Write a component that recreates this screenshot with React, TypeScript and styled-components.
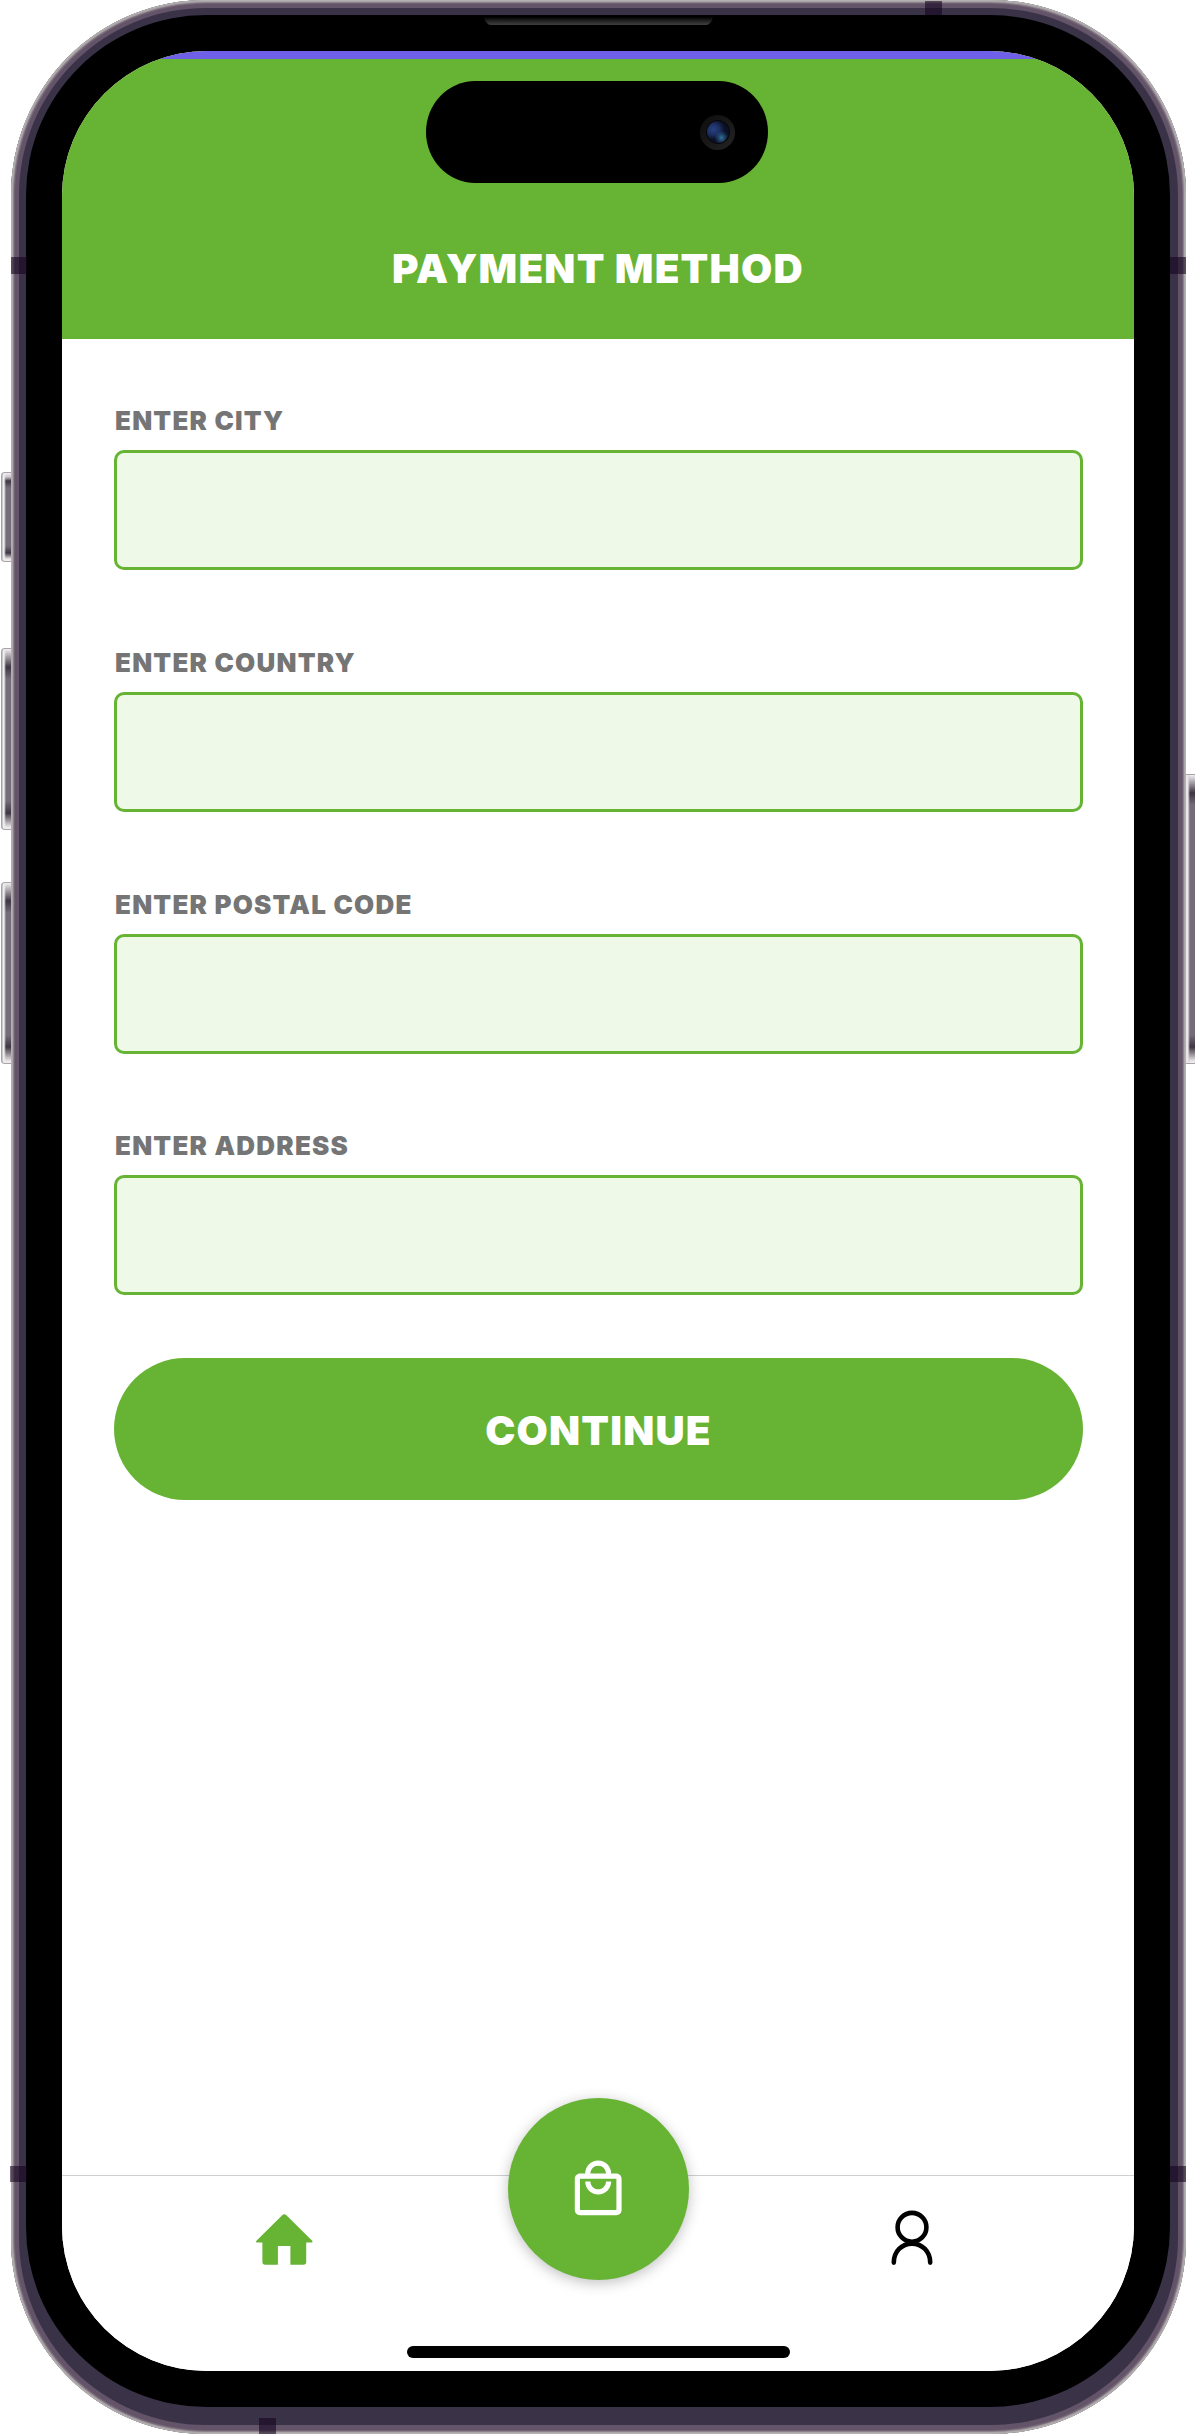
import React from 'react';
import styled, { createGlobalStyle } from 'styled-components';
import { MdOutlineLocalMall } from 'react-icons/md';

const GREEN = '#67b333';

const GlobalStyle = createGlobalStyle`
  * { box-sizing: border-box; }
  body { margin: 0; background: #fff; font-family: Inter, 'Liberation Sans', sans-serif; }
  button { font: inherit; border: 0; padding: 0; cursor: pointer; background: none; }
`;

const Stage = styled.div`
  position: relative;
  width: 1195px;
  height: 2434px;
  padding: 0 9px 0 11px;
  overflow: hidden;
  background: #fff;
`;

const SideKey = styled.div<{ $top: number; $height: number; $right?: boolean }>`
  position: absolute;
  top: ${p => p.$top}px;
  ${p => (p.$right ? 'left: 1186px;' : 'left: 1px;')}
  width: 10px;
  height: ${p => p.$height}px;
  border: 1px solid #a9a3a9;
  ${p => (p.$right ? 'border-left: 0; border-right-color: #8f8792; border-radius: 0 2px 2px 0;' : 'border-right: 0; border-radius: 4px 0 0 4px;')}
  background:
    linear-gradient(
      ${p => (p.$right ? 'to right, #e9e6e9 0 2px, rgba(200,196,202,.5) 3px, transparent 4px' : 'to right, #c9c7cc 0 1px, #f0eef0 1px 2px, transparent 4px')}
    ),
    linear-gradient(to bottom, #f1eff1 0, #c8c4c9 4px, #3c3542 ${p => (p.$height > 100 ? 18 : 8)}px, #756c79 ${p => (p.$height > 100 ? 30 : 15)}px,
      #756c79 calc(100% - ${p => (p.$height > 100 ? 28 : 15)}px), #3c3542 calc(100% - ${p => (p.$height > 100 ? 16 : 8)}px), #e9e6e9 calc(100% - 2px), #f1eff1 100%);
`;

const Rim = styled.div`
  width: 1175px;
  height: 2434px;
  padding: 8px;
  border-radius: 195px;
  background: #64546a;
  box-shadow: inset 0 0 0 1px #b3b0b0, inset 0 0 0 2px #aaa5a8, inset 0 0 0 3px #8c8089, inset 0 0 0 4px #706273;
`;

const Band = styled.div`
  height: 2417px;
  padding: 7px 8px 18px 7px;
  border-radius: 187px;
  background: #3a3347;
`;

const Bezel = styled.div`
  position: relative;
  height: 2392px;
  padding: 36px 36px 35px;
  border-radius: 180px;
  background: #000;
`;

const Antenna = styled.div<{ $x: number; $y: number; $w: number; $h: number }>`
  position: absolute;
  left: ${p => p.$x}px;
  top: ${p => p.$y}px;
  width: ${p => p.$w}px;
  height: ${p => p.$h}px;
  background: rgba(19, 2, 29, 0.58);
`;

const Speaker = styled.div`
  position: absolute;
  top: 0;
  left: 457px;
  width: 231px;
  height: 10px;
  border-radius: 0 0 8px 8px;
  background: linear-gradient(#000 20%, #1a1a1a 50%, #3a3a3a 90%);
  clip-path: polygon(0 0, 100% 0, 99% 60%, 97.5% 100%, 2.5% 100%, 1% 60%);
`;

const Screen = styled.main`
  position: relative;
  display: flex;
  flex-direction: column;
  width: 1072px;
  height: 2320px;
  border-radius: 145px;
  overflow: hidden;
  background: #fff;
`;

const Header = styled.header`
  flex: none;
  height: 288px;
  border-top: 8px solid #705fe8;
  background: ${GREEN};
  display: flex;
  flex-direction: column;
  align-items: center;
`;

const Island = styled.div`
  margin-top: 22px;
  margin-right: 2px;
  width: 342px;
  height: 102px;
  border-radius: 49px / 51px;
  background: #000;
  display: flex;
  align-items: center;
  justify-content: flex-end;
  padding-right: 33px;
`;

const Camera = styled.div`
  width: 35px;
  height: 35px;
  border-radius: 50%;
  background: linear-gradient(135deg, #0d0d0d, #242424);
  display: grid;
  place-items: center;
`;

const Lens = styled.div`
  width: 22px;
  height: 22px;
  border-radius: 50%;
  background:
    radial-gradient(circle at 66% 76%, #34729c 0, rgba(42, 95, 140, 0.6) 15%, transparent 32%),
    radial-gradient(ellipse at 28% 38%, #27427f 0, rgba(32, 52, 110, 0.85) 28%, transparent 52%),
    #0b1024;
  box-shadow: 0 0 0 1px #08080c;
`;

const Title = styled.h1`
  margin: 62px 0 0;
  font-size: 40.4px;
  line-height: 48px;
  font-weight: 900;
  letter-spacing: 1.2px;
  color: #fff;
  white-space: nowrap;
`;

const Form = styled.form`
  display: flex;
  flex-direction: column;
  flex: 1;
  padding: 66.4px 51px 0 52px;
`;

const Field = styled.label`
  display: flex;
  flex-direction: column;
  height: 241.67px;
`;

const Label = styled.span`
  height: 45px;
  padding-left: 1px;
  font-size: 26px;
  line-height: 32px;
  font-weight: 900;
  letter-spacing: 1.2px;
  color: #757575;
`;

const Input = styled.input`
  width: 969px;
  height: 120px;
  border: 3px solid ${GREEN};
  border-radius: 10px;
  outline: 0;
  background: #eef9e8;
`;

const Continue = styled.button`
  width: 969px;
  height: 142px;
  margin-top: -14px;
  padding-top: 2px;
  border-radius: 71px;
  background: ${GREEN};
  color: #fff;
  font-size: 40.4px;
  font-weight: 900;
  letter-spacing: 1.2px;
`;

const TabBar = styled.nav`
  flex: none;
  height: 196px;
  border-top: 1px solid #cfcfcf;
  display: grid;
  grid-template-columns: 446px 181px 445px;
  grid-template-rows: 170px 13px;
  background: #fff;
`;

const Tab = styled.button<{ $shift: number }>`
  display: block;
  height: 60px;
  margin: 34px 0 0 ${p => p.$shift}px;
  width: 64px;
  svg { display: block; }
`;

const Fab = styled.button`
  width: 181px;
  height: 182px;
  margin-top: -78px;
  border-radius: 50%;
  background: ${GREEN};
  color: #fff;
  display: grid;
  place-items: center;
  box-shadow: 0 3px 14px rgba(0, 0, 0, 0.25);
  svg { display: block; }
`;

const HomeIndicator = styled.div`
  grid-column: 1 / -1;
  justify-self: center;
  width: 383px;
  height: 12px;
  border-radius: 6px;
  background: #000;
`;

const HomeIcon = () => (
  <svg width="64" height="60" viewBox="0 0 64 60" fill={GREEN}>
    <path d="M30.2 5.2Q32.3 3.4 34.4 5.2L60.4 31Q61 32.5 59.5 32.6H54.2V52Q54.2 54.7 51.5 54.7H38.4V36H25.9V54.7H13.2Q10.4 54.7 10.4 52V32.6H5Q3.5 32.5 4.2 31Z" />
  </svg>
);

const PersonIcon = () => (
  <svg width="64" height="60" viewBox="0 0 64 60" fill="none" stroke="#000" strokeWidth="4.6" strokeLinecap="round">
    <circle cx="32" cy="17.3" r="14.4" />
    <path d="M13.8 52.6C13.8 41.6 21.8 33.6 32 33.6S50.2 41.6 50.2 52.6" />
  </svg>
);

const fields = ['ENTER CITY', 'ENTER COUNTRY', 'ENTER POSTAL CODE', 'ENTER ADDRESS'];

export default function App() {
  return (
    <>
      <GlobalStyle />
      <Stage>
        <SideKey $top={472} $height={90} />
        <SideKey $top={648} $height={182} />
        <SideKey $top={882} $height={182} />
        <SideKey $top={774} $height={290} $right />
        <Rim>
          <Band>
            <Bezel>
              <Speaker />
              <Screen>
                <Header>
                  <Island>
                    <Camera><Lens /></Camera>
                  </Island>
                  <Title>PAYMENT METHOD</Title>
                </Header>
                <Form onSubmit={e => e.preventDefault()}>
                  {fields.map(name => (
                    <Field key={name}>
                      <Label>{name}</Label>
                      <Input />
                    </Field>
                  ))}
                  <Continue type="submit">CONTINUE</Continue>
                </Form>
                <TabBar>
                  <Tab $shift={190} aria-label="Home"><HomeIcon /></Tab>
                  <Fab aria-label="Bag"><MdOutlineLocalMall size={62.4} /></Fab>
                  <Tab $shift={191} aria-label="Profile"><PersonIcon /></Tab>
                  <HomeIndicator />
                </TabBar>
              </Screen>
            </Bezel>
          </Band>
        </Rim>
        <Antenna $x={11} $y={257} $w={16} $h={17} />
        <Antenna $x={1170} $y={257} $w={16} $h={17} />
        <Antenna $x={925} $y={1} $w={17} $h={14} />
        <Antenna $x={10} $y={2166} $w={17} $h={16} />
        <Antenna $x={1170} $y={2166} $w={16} $h={16} />
        <Antenna $x={259} $y={2418} $w={17} $h={16} />
      </Stage>
    </>
  );
}
